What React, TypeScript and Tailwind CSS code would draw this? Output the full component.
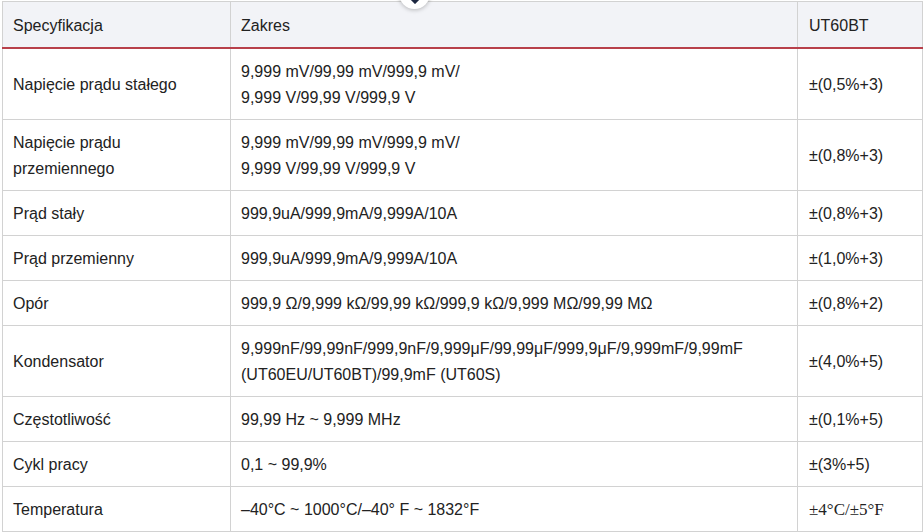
import React from "react"

type Row = { spec: string[]; range: string[]; acc: string; serif?: boolean }

const rows: Row[] = [
  {
    spec: ["Napięcie prądu stałego"],
    range: ["9,999 mV/99,99 mV/999,9 mV/", "9,999 V/99,99 V/999,9 V"],
    acc: "±(0,5%+3)",
  },
  {
    spec: ["Napięcie prądu", "przemiennego"],
    range: ["9,999 mV/99,99 mV/999,9 mV/", "9,999 V/99,99 V/999,9 V"],
    acc: "±(0,8%+3)",
  },
  { spec: ["Prąd stały"], range: ["999,9uA/999,9mA/9,999A/10A"], acc: "±(0,8%+3)" },
  { spec: ["Prąd przemienny"], range: ["999,9uA/999,9mA/9,999A/10A"], acc: "±(1,0%+3)" },
  {
    spec: ["Opór"],
    range: ["999,9 Ω/9,999 kΩ/99,99 kΩ/999,9 kΩ/9,999 MΩ/99,99 MΩ"],
    acc: "±(0,8%+2)",
  },
  {
    spec: ["Kondensator"],
    range: [
      "9,999nF/99,99nF/999,9nF/9,999μF/99,99μF/999,9μF/9,999mF/9,99mF",
      "(UT60EU/UT60BT)/99,9mF (UT60S)",
    ],
    acc: "±(4,0%+5)",
  },
  { spec: ["Częstotliwość"], range: ["99,99 Hz ~ 9,999 MHz"], acc: "±(0,1%+5)" },
  { spec: ["Cykl pracy"], range: ["0,1 ~ 99,9%"], acc: "±(3%+5)" },
  {
    spec: ["Temperatura"],
    range: ["–40°C ~ 1000°C/–40° F ~ 1832°F"],
    acc: "±4°C/±5°F",
    serif: true,
  },
]

function Lines({ lines }: { lines: string[] }) {
  return (
    <>
      {lines.map((l, i) => (
        <div key={i}>{l}</div>
      ))}
    </>
  )
}

export default function App() {
  return (
    <div
      className="relative h-[532px] w-[923px] overflow-hidden bg-white pl-[2px] pt-px text-[16px] leading-[26px] text-[#222]"
      style={{ fontFamily: '"Liberation Sans", Arial, sans-serif' }}
    >
      {/* floating button cut off at top */}
      <div className="absolute left-[399px] top-[-22px] z-10 flex h-[31px] w-[31px] items-end justify-center rounded-full bg-white pb-[5px] shadow-[0_1px_4px_rgba(0,0,0,0.25)]">
        <svg width="12" height="8" viewBox="0 0 12 8">
          <path d="M1 1 L6 6 L11 1" fill="none" stroke="#1c2740" strokeWidth="3" strokeLinecap="round" />
        </svg>
      </div>

      <table className="w-[920px] table-fixed border-collapse">
        <colgroup>
          <col className="w-[228px]" />
          <col className="w-[567px]" />
          <col className="w-[125px]" />
        </colgroup>
        <thead>
          <tr className="bg-[#f2f3f7]">
            <th className="border border-b-2 border-[#d2d2d2] border-b-[#b8404b] px-[10px] pb-[8px] pt-[11px] text-left font-normal">
              Specyfikacja
            </th>
            <th className="border border-b-2 border-[#d2d2d2] border-b-[#b8404b] px-[10px] pb-[8px] pt-[11px] text-left font-normal">
              Zakres
            </th>
            <th className="border border-b-2 border-[#d2d2d2] border-b-[#b8404b] px-[11px] pb-[8px] pt-[11px] text-left font-normal">
              UT60BT
            </th>
          </tr>
        </thead>
        <tbody>
          {rows.map((r, i) => (
            <tr key={i}>
              <td className="border border-[#d2d2d2] px-[10px] pb-[8px] pt-[10px] align-middle">
                <Lines lines={r.spec} />
              </td>
              <td className="border border-[#d2d2d2] px-[10px] pb-[8px] pt-[10px] align-middle">
                <Lines lines={r.range} />
              </td>
              <td className="border border-[#d2d2d2] px-[11px] pb-[8px] pt-[10px] align-middle">
                {r.serif ? (
                  <span className="text-[17px]" style={{ fontFamily: '"Liberation Serif", "Times New Roman", serif' }}>
                    {r.acc}
                  </span>
                ) : (
                  r.acc
                )}
              </td>
            </tr>
          ))}
        </tbody>
      </table>
    </div>
  )
}
